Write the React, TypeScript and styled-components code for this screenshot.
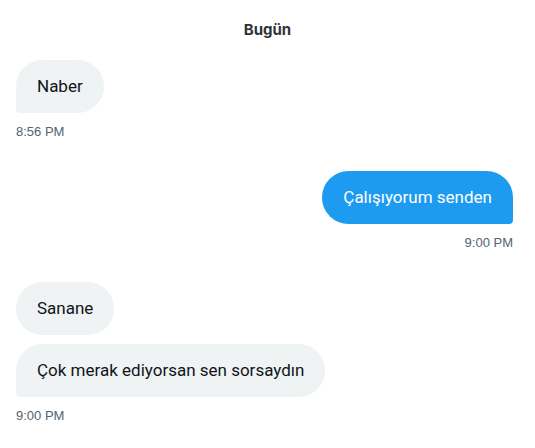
import React from "react";
import styled, { createGlobalStyle } from "styled-components";

type Message = { text: string };
type Group = { mine?: boolean; time: string; messages: Message[] };

const groups: Group[] = [
  { time: "8:56 PM", messages: [{ text: "Naber" }] },
  { mine: true, time: "9:00 PM", messages: [{ text: "Çalışıyorum senden" }] },
  {
    time: "9:00 PM",
    messages: [{ text: "Sanane" }, { text: "Çok merak ediyorsan sen sorsaydın" }],
  },
];

const GlobalStyle = createGlobalStyle`
  html, body {
    margin: 0;
    padding: 0;
    background: #ffffff;
  }
  body {
    font-family: Roboto, "Noto Sans", sans-serif;
  }
`;

const App: React.FC = () => {
  return (
    <>
      <GlobalStyle />
      <Thread>
        <DayLabel>Bugün</DayLabel>
        {groups.map((group, gi) => (
          <MessageGroup key={gi} $mine={group.mine}>
            {group.messages.map((m, mi) => (
              <Bubble
                key={mi}
                $mine={group.mine}
                $last={mi === group.messages.length - 1}
              >
                {m.text}
              </Bubble>
            ))}
            <Time>{group.time}</Time>
          </MessageGroup>
        ))}
      </Thread>
    </>
  );
};

const Thread = styled.div`
  display: flex;
  flex-direction: column;
  padding: 0 22px 0 16px;
  gap: 31px;
`;

const DayLabel = styled.div`
  font-family: Inter, sans-serif;
  text-align: center;
  font-size: 15px;
  font-weight: 700;
  color: #2f3336;
  padding-top: 21px;
  line-height: 18px;
  margin-bottom: -10px;
  padding-left: 6px;
`;

const MessageGroup = styled.div<{ $mine?: boolean }>`
  display: flex;
  flex-direction: column;
  align-items: ${(p) => (p.$mine ? "flex-end" : "flex-start")};
  gap: 9px;
`;

const Bubble = styled.div<{ $mine?: boolean; $last?: boolean }>`
  padding: 14px 21px 15px;
  font-size: 17px;
  line-height: 24px;
  border-radius: 27px;
  background: ${(p) => (p.$mine ? "#1d9bf0" : "#eff3f4")};
  color: ${(p) => (p.$mine ? "#ffffff" : "#0f1419")};
  ${(p) =>
    p.$last &&
    (p.$mine
      ? "border-bottom-right-radius: 4px;"
      : "border-bottom-left-radius: 4px;")}
`;

const Time = styled.div`
  font-family: "Liberation Sans", Arial, sans-serif;
  font-size: 13px;
  line-height: 16px;
  color: #536471;
  margin-top: 2px;
`;

export default App;
